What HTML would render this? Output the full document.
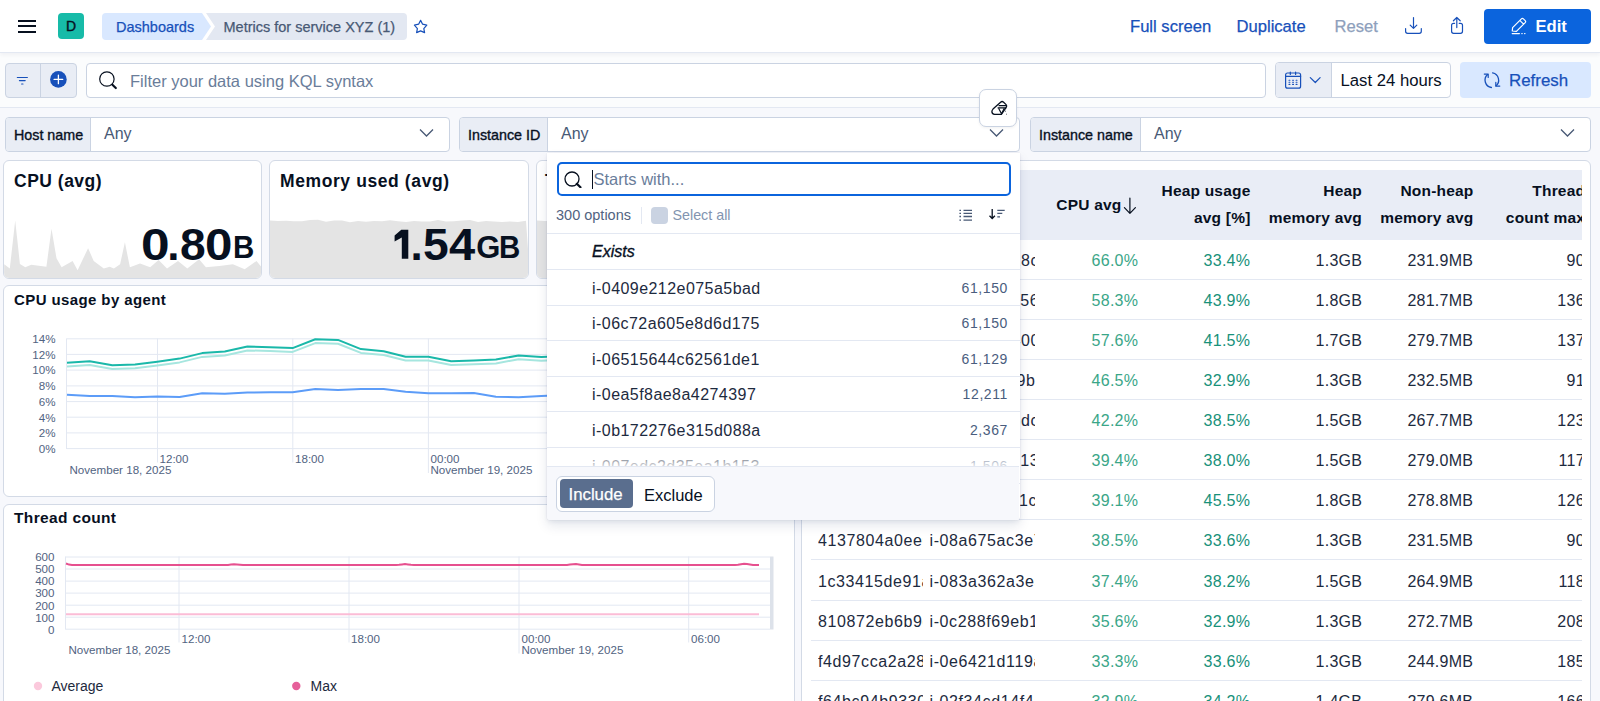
<!DOCTYPE html>
<html><head><meta charset="utf-8">
<style>
*{box-sizing:border-box;margin:0;padding:0}
html,body{width:1600px;height:701px;overflow:hidden;background:#f7f8fc;font-family:"Liberation Sans",sans-serif;color:#1d2a3e}
.abs{position:absolute}
#hdr{position:absolute;left:0;top:0;width:1600px;height:53px;background:#fff;border-bottom:1px solid #e3e8f2;box-shadow:0 2px 4px rgba(0,20,60,.05);z-index:1}
#qbar{position:absolute;left:0;top:53px;width:1600px;height:55px;background:#fbfcfd;border-bottom:1px solid #e3e8f2}
.t{position:absolute;white-space:nowrap;line-height:1}
.med{-webkit-text-stroke:0.25px currentColor}
.big{color:#07101f;font-weight:bold;transform-origin:0 0}
</style></head><body>
<!-- HEADER -->
<div id="hdr">
  <div class="abs" style="left:18px;top:19.7px;width:18px;height:2px;background:#07101f"></div>
  <div class="abs" style="left:18px;top:25.3px;width:18px;height:2px;background:#07101f"></div>
  <div class="abs" style="left:18px;top:30.8px;width:18px;height:2px;background:#07101f"></div>
  <div class="abs" style="left:58px;top:13px;width:26px;height:26px;border-radius:4px;background:#17bba8;color:#07101f;font-size:14px;text-align:center;line-height:26px;-webkit-text-stroke:0.4px #07101f">D</div>
  <svg class="abs" style="left:102px;top:13px" width="306" height="27" viewBox="0 0 306 27">
    <path d="M4 0 H100 L109 13.5 L100 27 H4 Q0 27 0 23 V4 Q0 0 4 0Z" fill="#d9e8ff"/>
    <path d="M104 0 H301 Q305 0 305 4 V23 Q305 27 301 27 H104 L113 13.5Z" fill="#e3e8f2"/>
  </svg>
  <div class="t med" style="left:116px;top:19.5px;font-size:14.5px;color:#1750ba">Dashboards</div>
  <div class="t med" style="left:223.5px;top:19.5px;font-size:14.5px;color:#485975">Metrics for service XYZ (1)</div>
  <div class="t med" style="left:1130px;top:18.5px;font-size:16.6px;color:#1750ba">Full screen</div>
  <div class="t med" style="left:1236.5px;top:18.5px;font-size:16.6px;color:#1750ba">Duplicate</div>
  <div class="t med" style="left:1334.5px;top:18.5px;font-size:16.6px;color:#8e9fbc">Reset</div>
  <div class="abs" style="left:1484px;top:9px;width:107px;height:35px;border-radius:4px;background:#0b64dd"></div>
  <div class="t" style="left:1535.5px;top:18.5px;font-size:16.6px;color:#fff;font-weight:bold">Edit</div>
</div>
<!-- QUERY BAR -->
<div id="qbar">
  <div class="abs" style="left:5px;top:10px;width:72px;height:35px;border:1px solid #cad3e2;border-radius:4px;background:#e9edf5"></div>
  <div class="abs" style="left:40px;top:10px;width:1px;height:35px;background:#cad3e2"></div>
  <div class="abs" style="left:86px;top:10px;width:1180px;height:35px;border:1px solid #cad3e2;border-radius:4px;background:#fff"></div>
  <div class="t" style="left:130px;top:19.5px;font-size:16.5px;color:#6a7d9a">Filter your data using KQL syntax</div>
  <div class="abs" style="left:1275px;top:9px;width:176px;height:36px;border:1px solid #cad3e2;border-radius:4px;background:#fff"></div>
  <div class="abs" style="left:1276px;top:10px;width:56px;height:34px;background:#e9edf5;border-right:1px solid #cad3e2;border-radius:3px 0 0 3px"></div>
  <div class="t" style="left:1340.5px;top:19.5px;font-size:16.7px;color:#07101f">Last 24 hours</div>
  <div class="abs" style="left:1460px;top:9px;width:131px;height:36px;border-radius:4px;background:#d9e8ff"></div>
  <div class="t med" style="left:1509px;top:19.5px;font-size:16.9px;color:#1750ba">Refresh</div>
</div>
<svg class="abs" style="left:0;top:0;z-index:2" width="1600" height="100" viewBox="0 0 1600 100" fill="none" stroke-linecap="round" stroke-linejoin="round">
  <path d="M420.6 20.4 L422.6 24.2 L426.8 25.2 L423.8 28.6 L424.6 32.6 L420.6 30.9 L416.6 32.6 L417.4 28.6 L414.4 25.2 L418.6 24.2 Z" stroke="#1750ba" stroke-width="1.2"/>
  <path d="M1413.5 17.5 V28.3 M1410.2 25.1 L1413.5 28.4 L1416.8 25.1 M1405.6 28.6 V31.3 Q1405.6 33.3 1407.6 33.3 H1419.3 Q1421.3 33.3 1421.3 31.3 V28.6" stroke="#1750ba" stroke-width="1.2"/>
  <path d="M1456.8 17.6 V27.6 M1453.4 20.8 L1456.8 17.5 L1460.2 20.8 M1454.6 23.3 H1453.5 Q1451.6 23.3 1451.6 25.3 V31.3 Q1451.6 33.3 1453.6 33.3 H1460.5 Q1462.5 33.3 1462.5 31.3 V25.3 Q1462.5 23.3 1460.5 23.3 H1459.2" stroke="#1750ba" stroke-width="1.2"/>
  <path d="M1512.3 31 L1512.6 27.6 L1521.4 18.8 Q1522.4 17.8 1523.4 18.8 L1525.2 20.6 Q1526.2 21.6 1525.2 22.6 L1516.4 31.4 Z M1519.8 20.4 L1523.6 24.2" stroke="#fff" stroke-width="1.2"/>
  <path d="M1512.2 33.6 H1519.4 M1521.8 33.6 H1522.2 M1524.6 33.6 H1525" stroke="#fff" stroke-width="1.2"/>
  <path d="M17.3 77.5 H27.4 M19.4 80.6 H25.2 M21.6 84 H23" stroke="#1750ba" stroke-width="1.1"/>
  <circle cx="58.4" cy="79.4" r="8.3" fill="#1750ba" stroke="none"/>
  <path d="M58.4 75.1 V83.7 M54.1 79.4 H62.7" stroke="#fff" stroke-width="1.3"/>
  <circle cx="106.9" cy="79" r="7.2" stroke="#07101f" stroke-width="1.2"/>
  <path d="M112.4 84.8 L115.8 88" stroke="#07101f" stroke-width="2.2"/>
  <rect x="1285.6" y="73" width="15" height="15.2" rx="2" stroke="#1750ba" stroke-width="1.2"/>
  <path d="M1285.6 76.4 H1300.6 M1290.3 72 V74.4 M1295.6 72 V74.4" stroke="#1750ba" stroke-width="1.2"/>
  <path d="M1289 80.2h0.9M1292.6 80.2h0.9M1296.1 80.2h0.9M1289 82.3h0.9M1292.6 82.3h0.9M1296.1 82.3h0.9M1289 84.4h0.9M1292.6 84.4h0.9M1296.1 84.4h0.9" stroke="#1750ba" stroke-width="1.1"/>
  <path d="M1310.3 77.6 L1315.3 82.5 L1320.1 77.7" stroke="#1750ba" stroke-width="1.2"/>
  <path d="M1487.6 74.6 A7.4 7.4 0 0 0 1491.4 87.5 M1492.6 72.9 A7.4 7.4 0 0 1 1495.9 85.9" stroke="#1750ba" stroke-width="1.3"/>
  <path d="M1484.3 74.1 H1488.2 V77.5 M1495.8 82.4 V86.1 H1499.8" stroke="#1750ba" stroke-width="1.2"/>
</svg>
<!-- CONTROLS -->
<div class="abs" style="left:5px;top:117px;width:445px;height:35px;border:1px solid #cad3e2;border-radius:4px;background:#fff;overflow:hidden">
  <div class="abs" style="left:0;top:0;width:85px;height:33px;background:#e9edf5;border-right:1px solid #cad3e2"></div>
</div>
<div class="t" style="left:14px;top:128px;font-size:14.3px;color:#07101f;-webkit-text-stroke:0.35px #07101f">Host name</div>
<div class="t" style="left:104px;top:126px;font-size:16px;color:#485975">Any</div>
<svg class="abs" style="left:419px;top:128px" width="15" height="10" viewBox="0 0 15 10"><path d="M1 1.5 L7.5 8 L14 1.5" fill="none" stroke="#485975" stroke-width="1.3"/></svg>

<div class="abs" style="left:459px;top:117px;width:561px;height:35px;border:1px solid #cad3e2;border-radius:4px;background:#fff;overflow:hidden">
  <div class="abs" style="left:0;top:0;width:88px;height:33px;background:#e9edf5;border-right:1px solid #cad3e2"></div>
</div>
<div class="t" style="left:468px;top:128px;font-size:14.3px;color:#07101f;-webkit-text-stroke:0.35px #07101f">Instance ID</div>
<div class="t" style="left:561px;top:126px;font-size:16px;color:#485975">Any</div>
<svg class="abs" style="left:989px;top:128px" width="15" height="10" viewBox="0 0 15 10"><path d="M1 1.5 L7.5 8 L14 1.5" fill="none" stroke="#485975" stroke-width="1.3"/></svg>

<div class="abs" style="left:1030px;top:117px;width:561px;height:35px;border:1px solid #cad3e2;border-radius:4px;background:#fff;overflow:hidden">
  <div class="abs" style="left:0;top:0;width:110px;height:33px;background:#e9edf5;border-right:1px solid #cad3e2"></div>
</div>
<div class="t" style="left:1039px;top:128px;font-size:14.3px;color:#07101f;-webkit-text-stroke:0.35px #07101f">Instance name</div>
<div class="t" style="left:1154px;top:126px;font-size:16px;color:#485975">Any</div>
<svg class="abs" style="left:1560px;top:128px" width="15" height="10" viewBox="0 0 15 10"><path d="M1 1.5 L7.5 8 L14 1.5" fill="none" stroke="#485975" stroke-width="1.3"/></svg>
<!-- PANELS -->
<div class="abs" style="left:3px;top:160px;width:259px;height:119px;border:1px solid #d3dae6;border-radius:6px;background:#fff;overflow:hidden">
  <svg class="abs" style="left:0;top:0" width="258" height="117" viewBox="0 0 258 117"><path d="M0 117 L0.2 103.2 L5.8 107.5 L11.2 59.4 L15.9 102.9 L21.3 106.3 L27.2 103.8 L42.4 105.8 L47.5 67.8 L52.5 97.3 L57.6 106.3 L68.6 99.9 L73.6 109.2 L84.1 87.2 L89.7 99.9 L99.8 107.5 L105.7 105.8 L109.9 107.5 L116.1 103.2 L120.9 81.3 L125.9 106.3 L136.0 102.4 L146.2 106.3 L154.6 99.0 L163.0 107.5 L174.0 99.9 L183.3 107.5 L195.1 98.2 L201.9 106.3 L215.4 105.0 L228.9 103.2 L240.7 108.3 L252.5 99.9 L257.2 105.8 L258 117 Z" fill="#e4e4e4"/></svg>
</div>
<div class="t" style="left:14px;top:172.5px;font-size:17.5px;color:#07101f;font-weight:bold;letter-spacing:0.5px">CPU (avg)</div>
<div class="t big" style="left:140.7px;top:222.7px;font-size:44px;transform:scaleX(1.17)">0</div><div class="t big" style="left:167.2px;top:222.7px;font-size:44px;transform:scaleX(1.00)">.</div><div class="t big" style="left:180.2px;top:222.7px;font-size:44px;transform:scaleX(1.05)">8</div><div class="t big" style="left:205.0px;top:222.7px;font-size:44px;transform:scaleX(1.12)">0</div><div class="t big" style="left:232.5px;top:232.3px;font-size:31px;transform:scaleX(0.95)">B</div>

<div class="abs" style="left:269px;top:160px;width:260px;height:119px;border:1px solid #d3dae6;border-radius:6px;background:#fff;overflow:hidden">
  <svg class="abs" style="left:0;top:0" width="258" height="117" viewBox="0 0 258 117"><path d="M0 117 L0 59.4 L8 60.1 L16 59.7 L24 60.2 L32 60.3 L40 59.0 L48 58.8 L56 60.8 L64 59.4 L72 59.4 L80 61.2 L88 59.9 L96 60.8 L104 59.9 L112 60.3 L120 59.2 L128 60.3 L136 60.9 L144 60.1 L152 60.6 L160 60.4 L168 59.0 L176 60.6 L184 60.2 L192 59.5 L200 58.9 L208 60.9 L216 59.9 L224 60.5 L232 60.9 L240 60.5 L248 61.0 L256 59.7 L260 117 Z" fill="#e4e4e4"/></svg>
</div>
<div class="t" style="left:280px;top:172.5px;font-size:17.5px;color:#07101f;font-weight:bold;letter-spacing:0.6px">Memory used (avg)</div>
<svg class="abs" style="left:390px;top:225px" width="22" height="36" viewBox="390 225 22 36"><path d="M401.3 229.8 H408.3 V258.8 H401.8 V237.6 L394.6 241.6 V235.6 Z" fill="#07101f"/></svg><div class="t big" style="left:410.4px;top:222.7px;font-size:44px;transform:scaleX(1.00)">.</div><div class="t big" style="left:423.1px;top:222.7px;font-size:44px;transform:scaleX(1.05)">5</div><div class="t big" style="left:449.1px;top:222.7px;font-size:44px;transform:scaleX(1.07)">4</div><div class="t big" style="left:476.3px;top:232.3px;font-size:31px;transform:scaleX(1.00)">G</div><div class="t big" style="left:498.6px;top:232.3px;font-size:31px;transform:scaleX(0.95)">B</div>

<div class="abs" style="left:536px;top:160px;width:260px;height:119px;border:1px solid #d3dae6;border-radius:6px;background:#fff;overflow:hidden">
  <svg class="abs" style="left:0;top:0" width="258" height="117" viewBox="0 0 258 117"><path d="M0 117 L0 59.4 L8 60.1 L16 59.7 L24 60.2 L32 60.3 L40 59.0 L48 58.8 L56 60.8 L64 59.4 L72 59.4 L80 61.2 L88 59.9 L96 60.8 L104 59.9 L112 60.3 L120 59.2 L128 60.3 L136 60.9 L144 60.1 L152 60.6 L160 60.4 L168 59.0 L176 60.6 L184 60.2 L192 59.5 L200 58.9 L208 60.9 L216 59.9 L224 60.5 L232 60.9 L240 60.5 L248 61.0 L256 59.7 L260 117 Z" fill="#e4e4e4"/></svg>
</div>

<div class="t" style="left:545px;top:172.5px;font-size:17.5px;color:#07101f;font-weight:bold">Thread count</div>
<div class="abs" style="left:3px;top:285px;width:792px;height:212px;border:1px solid #d3dae6;border-radius:6px;background:#fff"></div>
<div class="t" style="left:14px;top:291.7px;font-size:15px;color:#07101f;font-weight:bold;letter-spacing:0.4px">CPU usage by agent</div>


<div class="abs" style="left:3px;top:504px;width:792px;height:220px;border:1px solid #d3dae6;border-radius:6px;background:#fff"></div>
<div class="t" style="left:14px;top:510px;font-size:15.5px;color:#07101f;font-weight:bold;letter-spacing:0.35px">Thread count</div>
<svg class="abs" style="left:0;top:0" width="800" height="701" viewBox="0 0 800 701">
<g stroke="#e3e8f2" stroke-width="1" fill="none"><path d="M66.5 338.8 H781"/><path d="M66.5 354.4 H781"/><path d="M66.5 370.1 H781"/><path d="M66.5 385.9 H781"/><path d="M66.5 401.6 H781"/><path d="M66.5 417.2 H781"/><path d="M66.5 432.9 H781"/><path d="M66.5 448.6 H781"/><path d="M66.5 338.5 V449"/><path d="M157.5 338.5 V462.5"/><path d="M292.8 338.5 V462.5"/><path d="M428.4 338.5 V473.0"/><path d="M563.5 338.5 V462.5"/></g>
<g font-family="Liberation Sans" font-size="11.6" fill="#516381" text-anchor="end"><text x="55.5" y="343.1">14%</text><text x="55.5" y="358.8">12%</text><text x="55.5" y="374.4">10%</text><text x="55.5" y="390.2">8%</text><text x="55.5" y="405.9">6%</text><text x="55.5" y="421.6">4%</text><text x="55.5" y="437.2">2%</text><text x="55.5" y="452.9">0%</text></g>
<g font-family="Liberation Sans" font-size="11.6" fill="#516381"><text x="159.5" y="462.5">12:00</text><text x="69.5" y="474">November 18, 2025</text><text x="295" y="462.5">18:00</text><text x="430.5" y="462.5">00:00</text><text x="430.5" y="474">November 19, 2025</text></g>
<path d="M67.0 366.6 L89.7 365.0 L112.3 369.1 L135.0 368.2 L157.3 365.5 L179.6 362.4 L202.2 356.9 L224.8 355.4 L247.4 350.4 L270.0 351.1 L292.6 351.9 L315.3 343.1 L338.0 343.7 L360.9 352.9 L383.7 355.0 L405.6 360.5 L428.4 360.5 L451.2 365.1 L473.9 364.2 L495.9 363.4 L518.6 359.2 L541.4 360.8 L564.0 359.8 L586.6 360.8 L609.2 358.8 L631.8 357.8 L654.4 359.8 L677.0 358.8 L699.6 356.8 L722.2 357.8 L744.8 358.8 L767.4 357.8 L780.0 357.8" fill="none" stroke="#a6e6df" stroke-width="2" stroke-linejoin="round"/><path d="M67.0 362.8 L89.7 361.2 L112.3 365.3 L135.0 364.4 L157.3 361.7 L179.6 358.6 L202.2 353.1 L224.8 351.6 L247.4 346.6 L270.0 347.3 L292.6 348.1 L315.3 339.3 L338.0 339.9 L360.9 349.1 L383.7 351.2 L405.6 356.7 L428.4 356.7 L451.2 361.3 L473.9 360.4 L495.9 359.6 L518.6 355.4 L541.4 357.0 L564.0 356.0 L586.6 357.0 L609.2 355.0 L631.8 354.0 L654.4 356.0 L677.0 355.0 L699.6 353.0 L722.2 354.0 L744.8 355.0 L767.4 354.0 L780.0 354.0" fill="none" stroke="#1ab8a9" stroke-width="2" stroke-linejoin="round"/><path d="M67.0 394.8 L89.7 396.1 L112.3 396.1 L135.0 397.2 L157.3 396.6 L179.6 396.9 L202.2 393.3 L224.8 393.8 L247.4 392.5 L270.0 392.2 L292.6 392.2 L315.3 389.1 L338.0 390.0 L360.9 389.1 L383.7 389.1 L405.6 391.7 L428.4 393.3 L451.2 393.3 L473.9 393.0 L495.9 396.7 L518.6 397.2 L541.4 395.9 L564.0 395.0 L586.6 394.0 L609.2 395.0 L631.8 396.0 L654.4 395.0 L677.0 394.0 L699.6 395.0 L722.2 396.0 L744.8 395.0 L767.4 395.0 L780.0 395.0" fill="none" stroke="#5c9cf8" stroke-width="2" stroke-linejoin="round"/>
<g stroke="#e3e8f2" stroke-width="1" fill="none"><path d="M65.5 557.0 H770"/><path d="M65.5 569.0 H770"/><path d="M65.5 581.1 H770"/><path d="M65.5 593.1 H770"/><path d="M65.5 605.2 H770"/><path d="M65.5 617.2 H770"/><path d="M65.5 629.2 H770"/><path d="M65.5 556.5 V629.5"/><path d="M179.0 556.5 V642.5"/><path d="M349.0 556.5 V642.5"/><path d="M519.0 556.5 V653.5"/><path d="M688.7 556.5 V642.5"/></g><rect x="770" y="556.5" width="3.5" height="73" fill="#dde2ea"/>
<g font-family="Liberation Sans" font-size="11.6" fill="#516381" text-anchor="end"><text x="54.5" y="561.3">600</text><text x="54.5" y="573.3">500</text><text x="54.5" y="585.4">400</text><text x="54.5" y="597.4">300</text><text x="54.5" y="609.5">200</text><text x="54.5" y="621.5">100</text><text x="54.5" y="633.5">0</text></g>
<g font-family="Liberation Sans" font-size="11.6" fill="#516381"><text x="181.5" y="642.5">12:00</text><text x="68.5" y="653.5">November 18, 2025</text><text x="351" y="642.5">18:00</text><text x="521.5" y="642.5">00:00</text><text x="521.5" y="653.5">November 19, 2025</text><text x="691" y="642.5">06:00</text></g>
<path d="M66.0 563.5 L69.0 564.6 L72.0 565.0 L75.0 565.0 L78.0 565.0 L81.0 565.0 L84.0 565.0 L87.0 565.0 L90.0 565.0 L93.0 565.0 L96.0 565.0 L99.0 565.0 L102.0 565.0 L105.0 565.0 L108.0 565.0 L111.0 565.0 L114.0 565.0 L117.0 565.0 L120.0 565.0 L123.0 565.0 L126.0 565.0 L129.0 565.0 L132.0 565.0 L135.0 565.0 L138.0 565.0 L141.0 565.0 L144.0 565.0 L147.0 565.0 L150.0 565.0 L153.0 565.0 L156.0 565.0 L159.0 565.0 L162.0 565.0 L165.0 565.0 L168.0 565.0 L171.0 565.0 L174.0 565.0 L177.0 565.0 L180.0 565.0 L183.0 565.0 L186.0 565.0 L189.0 565.0 L192.0 565.0 L195.0 565.0 L198.0 565.0 L201.0 565.0 L204.0 565.0 L207.0 565.0 L210.0 565.0 L213.0 565.0 L216.0 565.0 L219.0 565.0 L222.0 565.0 L225.0 565.0 L228.0 564.9 L231.0 564.6 L234.0 564.3 L237.0 564.4 L240.0 564.7 L243.0 565.0 L246.0 565.0 L249.0 565.0 L252.0 565.0 L255.0 565.0 L258.0 565.0 L261.0 565.0 L264.0 565.0 L267.0 565.0 L270.0 565.0 L273.0 565.0 L276.0 565.0 L279.0 565.0 L282.0 565.0 L285.0 565.0 L288.0 565.0 L291.0 565.0 L294.0 565.0 L297.0 565.0 L300.0 565.0 L303.0 565.0 L306.0 565.0 L309.0 565.0 L312.0 565.0 L315.0 565.0 L318.0 565.0 L321.0 565.0 L324.0 565.0 L327.0 565.0 L330.0 565.0 L333.0 565.0 L336.0 565.0 L339.0 565.0 L342.0 565.0 L345.0 565.0 L348.0 565.0 L351.0 565.0 L354.0 565.0 L357.0 565.0 L360.0 565.0 L363.0 565.0 L366.0 565.0 L369.0 565.0 L372.0 565.0 L375.0 565.0 L378.0 565.0 L381.0 565.0 L384.0 565.0 L387.0 565.0 L390.0 565.0 L393.0 565.0 L396.0 565.0 L399.0 564.8 L402.0 564.4 L405.0 564.0 L408.0 564.4 L411.0 564.8 L414.0 565.0 L417.0 565.0 L420.0 565.0 L423.0 565.0 L426.0 565.0 L429.0 565.0 L432.0 565.0 L435.0 565.0 L438.0 565.0 L441.0 565.0 L444.0 565.0 L447.0 565.0 L450.0 565.0 L453.0 565.0 L456.0 565.0 L459.0 565.0 L462.0 565.0 L465.0 565.0 L468.0 565.0 L471.0 565.0 L474.0 565.0 L477.0 565.0 L480.0 565.0 L483.0 565.0 L486.0 565.0 L489.0 565.0 L492.0 565.0 L495.0 565.0 L498.0 565.0 L501.0 565.0 L504.0 565.0 L507.0 565.0 L510.0 565.0 L513.0 565.0 L516.0 565.0 L519.0 565.0 L522.0 565.0 L525.0 565.0 L528.0 565.0 L531.0 565.0 L534.0 565.0 L537.0 565.0 L540.0 565.0 L543.0 565.0 L546.0 565.0 L549.0 565.0 L552.0 565.0 L555.0 565.0 L558.0 565.0 L561.0 565.0 L564.0 565.0 L567.0 565.0 L570.0 564.6 L573.0 564.2 L576.0 564.1 L579.0 564.5 L582.0 564.9 L585.0 565.0 L588.0 565.0 L591.0 565.0 L594.0 565.0 L597.0 565.0 L600.0 565.0 L603.0 565.0 L606.0 565.0 L609.0 565.0 L612.0 565.0 L615.0 565.0 L618.0 565.0 L621.0 565.0 L624.0 565.0 L627.0 565.0 L630.0 565.0 L633.0 565.0 L636.0 565.0 L639.0 565.0 L642.0 565.0 L645.0 565.0 L648.0 565.0 L651.0 565.0 L654.0 565.0 L657.0 565.0 L660.0 565.0 L663.0 565.0 L666.0 565.0 L669.0 565.0 L672.0 565.0 L675.0 565.0 L678.0 565.0 L681.0 565.0 L684.0 565.0 L687.0 565.0 L690.0 565.0 L693.0 565.0 L696.0 565.0 L699.0 565.0 L702.0 565.0 L705.0 565.0 L708.0 565.0 L711.0 565.0 L714.0 565.0 L717.0 565.0 L720.0 565.0 L723.0 565.0 L726.0 565.0 L729.0 565.0 L732.0 565.0 L735.0 565.0 L738.0 564.8 L741.0 564.2 L744.0 563.7 L747.0 563.9 L750.0 564.4 L753.0 565.0 L756.0 565.0 L759.0 565.0" fill="none" stroke="#e6508f" stroke-width="2"/><path d="M66 614.3 H759" fill="none" stroke="#fbbcd6" stroke-width="2"/><circle cx="38" cy="686" r="4.2" fill="#fbc9dc"/><circle cx="296.3" cy="686" r="4.2" fill="#e6609a"/><g font-family="Liberation Sans" font-size="14" fill="#1d2a3e"><text x="51.5" y="690.5">Average</text><text x="310.5" y="690.5">Max</text></g></svg>


<div class="abs" style="left:801px;top:160px;width:790px;height:580px;border:1px solid #d3dae6;border-radius:6px;background:#fff"></div>
<!--TABLE_START--><div class="abs" style="left:811px;top:170px;width:771px;height:531px;overflow:hidden">
<div class="abs" style="left:0;top:0;width:771px;height:69.5px;background:#e9edf6"></div>
<div class="t" style="right:460.5px;top:26.5px;font-size:15.5px;font-weight:bold;color:#07101f;letter-spacing:0.2px">CPU avg</div>
<svg class="abs" style="left:312.0px;top:27.0px" width="14" height="18" viewBox="0 0 14 18" fill="none" stroke="#07101f" stroke-width="1.2" stroke-linecap="round" stroke-linejoin="round"><path d="M6.9 1 V16.3 M1.4 10.6 L6.9 16.3 L12.4 10.6"/></svg>
<div class="t" style="right:331.5px;top:13.0px;font-size:15.5px;font-weight:bold;color:#07101f;letter-spacing:0.2px">Heap usage</div>
<div class="t" style="right:331.5px;top:40.0px;font-size:15.5px;font-weight:bold;color:#07101f;letter-spacing:0.2px">avg [%]</div>
<div class="t" style="right:220.0px;top:13.0px;font-size:15.5px;font-weight:bold;color:#07101f;letter-spacing:0.2px">Heap</div>
<div class="t" style="right:220.0px;top:40.0px;font-size:15.5px;font-weight:bold;color:#07101f;letter-spacing:0.2px">memory avg</div>
<div class="t" style="right:108.5px;top:13.0px;font-size:15.5px;font-weight:bold;color:#07101f;letter-spacing:0.2px">Non-heap</div>
<div class="t" style="right:108.5px;top:40.0px;font-size:15.5px;font-weight:bold;color:#07101f;letter-spacing:0.2px">memory avg</div>
<div class="t" style="right:-3.2px;top:13.0px;font-size:15.5px;font-weight:bold;color:#07101f;letter-spacing:0.2px">Thread</div>
<div class="t" style="right:-3.2px;top:40.0px;font-size:15.5px;font-weight:bold;color:#07101f;letter-spacing:0.2px">count max</div>
<div class="abs" style="left:0;top:108.7px;width:771px;height:1px;background:#e3e8f2"></div>
<div class="abs" style="left:7px;top:80.7px;width:105px;height:22px;overflow:hidden"><div class="t" style="left:0;top:2px;font-size:16px;color:#1d2a3e;letter-spacing:0.25px;letter-spacing:0.6px">4a1b27e0c58c</div></div>
<div class="abs" style="left:118.5px;top:80.7px;width:105px;height:22px;overflow:hidden"><div class="t" style="left:5.5px;top:2px;font-size:16px;color:#1d2a3e;letter-spacing:0.25px;letter-spacing:0.6px">i-0409e2128c7</div></div>
<div class="t" style="right:443.8px;top:82.7px;font-size:16px;color:#1d2a3e;letter-spacing:0.25px;color:#3aa688">66.0%</div>
<div class="t" style="right:331.8px;top:82.7px;font-size:16px;color:#1d2a3e;letter-spacing:0.25px;color:#18917a">33.4%</div>
<div class="t" style="right:219.8px;top:82.7px;font-size:16px;color:#1d2a3e;letter-spacing:0.25px">1.3GB</div>
<div class="t" style="right:108.8px;top:82.7px;font-size:16px;color:#1d2a3e;letter-spacing:0.25px">231.9MB</div>
<div class="t" style="right:-2.8px;top:82.7px;font-size:16px;color:#1d2a3e;letter-spacing:0.25px">90</div>
<div class="abs" style="left:0;top:148.8px;width:771px;height:1px;background:#e3e8f2"></div>
<div class="abs" style="left:7px;top:120.8px;width:105px;height:22px;overflow:hidden"><div class="t" style="left:0;top:2px;font-size:16px;color:#1d2a3e;letter-spacing:0.25px;letter-spacing:0.6px">5b2c38f1d56e</div></div>
<div class="abs" style="left:118.5px;top:120.8px;width:105px;height:22px;overflow:hidden"><div class="t" style="left:5.5px;top:2px;font-size:16px;color:#1d2a3e;letter-spacing:0.25px;letter-spacing:0.6px">i-06c72a6056f</div></div>
<div class="t" style="right:443.8px;top:122.8px;font-size:16px;color:#1d2a3e;letter-spacing:0.25px;color:#3aa688">58.3%</div>
<div class="t" style="right:331.8px;top:122.8px;font-size:16px;color:#1d2a3e;letter-spacing:0.25px;color:#18917a">43.9%</div>
<div class="t" style="right:219.8px;top:122.8px;font-size:16px;color:#1d2a3e;letter-spacing:0.25px">1.8GB</div>
<div class="t" style="right:108.8px;top:122.8px;font-size:16px;color:#1d2a3e;letter-spacing:0.25px">281.7MB</div>
<div class="t" style="right:-2.8px;top:122.8px;font-size:16px;color:#1d2a3e;letter-spacing:0.25px">136</div>
<div class="abs" style="left:0;top:188.9px;width:771px;height:1px;background:#e3e8f2"></div>
<div class="abs" style="left:7px;top:160.9px;width:105px;height:22px;overflow:hidden"><div class="t" style="left:0;top:2px;font-size:16px;color:#1d2a3e;letter-spacing:0.25px;letter-spacing:0.6px">6c3d49a2e00c</div></div>
<div class="abs" style="left:118.5px;top:160.9px;width:105px;height:22px;overflow:hidden"><div class="t" style="left:5.5px;top:2px;font-size:16px;color:#1d2a3e;letter-spacing:0.25px;letter-spacing:0.6px">i-0651564400c</div></div>
<div class="t" style="right:443.8px;top:162.9px;font-size:16px;color:#1d2a3e;letter-spacing:0.25px;color:#3aa688">57.6%</div>
<div class="t" style="right:331.8px;top:162.9px;font-size:16px;color:#1d2a3e;letter-spacing:0.25px;color:#18917a">41.5%</div>
<div class="t" style="right:219.8px;top:162.9px;font-size:16px;color:#1d2a3e;letter-spacing:0.25px">1.7GB</div>
<div class="t" style="right:108.8px;top:162.9px;font-size:16px;color:#1d2a3e;letter-spacing:0.25px">279.7MB</div>
<div class="t" style="right:-2.8px;top:162.9px;font-size:16px;color:#1d2a3e;letter-spacing:0.25px">137</div>
<div class="abs" style="left:0;top:229.0px;width:771px;height:1px;background:#e3e8f2"></div>
<div class="abs" style="left:7px;top:201.0px;width:105px;height:22px;overflow:hidden"><div class="t" style="left:0;top:2px;font-size:16px;color:#1d2a3e;letter-spacing:0.25px;letter-spacing:0.6px">7d4e5ab3f9be</div></div>
<div class="abs" style="left:118.5px;top:201.0px;width:105px;height:22px;overflow:hidden"><div class="t" style="left:5.5px;top:2px;font-size:16px;color:#1d2a3e;letter-spacing:0.25px;letter-spacing:0.6px">i-0ea5f8ae9be</div></div>
<div class="t" style="right:443.8px;top:203.0px;font-size:16px;color:#1d2a3e;letter-spacing:0.25px;color:#3aa688">46.5%</div>
<div class="t" style="right:331.8px;top:203.0px;font-size:16px;color:#1d2a3e;letter-spacing:0.25px;color:#18917a">32.9%</div>
<div class="t" style="right:219.8px;top:203.0px;font-size:16px;color:#1d2a3e;letter-spacing:0.25px">1.3GB</div>
<div class="t" style="right:108.8px;top:203.0px;font-size:16px;color:#1d2a3e;letter-spacing:0.25px">232.5MB</div>
<div class="t" style="right:-2.8px;top:203.0px;font-size:16px;color:#1d2a3e;letter-spacing:0.25px">91</div>
<div class="abs" style="left:0;top:269.1px;width:771px;height:1px;background:#e3e8f2"></div>
<div class="abs" style="left:7px;top:241.1px;width:105px;height:22px;overflow:hidden"><div class="t" style="left:0;top:2px;font-size:16px;color:#1d2a3e;letter-spacing:0.25px;letter-spacing:0.6px">8e5f6bc4adcc</div></div>
<div class="abs" style="left:118.5px;top:241.1px;width:105px;height:22px;overflow:hidden"><div class="t" style="left:5.5px;top:2px;font-size:16px;color:#1d2a3e;letter-spacing:0.25px;letter-spacing:0.6px">i-0b172276dc4</div></div>
<div class="t" style="right:443.8px;top:243.1px;font-size:16px;color:#1d2a3e;letter-spacing:0.25px;color:#3aa688">42.2%</div>
<div class="t" style="right:331.8px;top:243.1px;font-size:16px;color:#1d2a3e;letter-spacing:0.25px;color:#18917a">38.5%</div>
<div class="t" style="right:219.8px;top:243.1px;font-size:16px;color:#1d2a3e;letter-spacing:0.25px">1.5GB</div>
<div class="t" style="right:108.8px;top:243.1px;font-size:16px;color:#1d2a3e;letter-spacing:0.25px">267.7MB</div>
<div class="t" style="right:-2.8px;top:243.1px;font-size:16px;color:#1d2a3e;letter-spacing:0.25px">123</div>
<div class="abs" style="left:0;top:309.2px;width:771px;height:1px;background:#e3e8f2"></div>
<div class="abs" style="left:7px;top:281.2px;width:105px;height:22px;overflow:hidden"><div class="t" style="left:0;top:2px;font-size:16px;color:#1d2a3e;letter-spacing:0.25px;letter-spacing:0.6px">9f607cd5b13a</div></div>
<div class="abs" style="left:118.5px;top:281.2px;width:105px;height:22px;overflow:hidden"><div class="t" style="left:5.5px;top:2px;font-size:16px;color:#1d2a3e;letter-spacing:0.25px;letter-spacing:0.6px">i-007edc2d13e</div></div>
<div class="t" style="right:443.8px;top:283.2px;font-size:16px;color:#1d2a3e;letter-spacing:0.25px;color:#3aa688">39.4%</div>
<div class="t" style="right:331.8px;top:283.2px;font-size:16px;color:#1d2a3e;letter-spacing:0.25px;color:#18917a">38.0%</div>
<div class="t" style="right:219.8px;top:283.2px;font-size:16px;color:#1d2a3e;letter-spacing:0.25px">1.5GB</div>
<div class="t" style="right:108.8px;top:283.2px;font-size:16px;color:#1d2a3e;letter-spacing:0.25px">279.0MB</div>
<div class="t" style="right:-2.8px;top:283.2px;font-size:16px;color:#1d2a3e;letter-spacing:0.25px">117</div>
<div class="abs" style="left:0;top:349.3px;width:771px;height:1px;background:#e3e8f2"></div>
<div class="abs" style="left:7px;top:321.3px;width:105px;height:22px;overflow:hidden"><div class="t" style="left:0;top:2px;font-size:16px;color:#1d2a3e;letter-spacing:0.25px;letter-spacing:0.6px">a0718de6clca</div></div>
<div class="abs" style="left:118.5px;top:321.3px;width:105px;height:22px;overflow:hidden"><div class="t" style="left:5.5px;top:2px;font-size:16px;color:#1d2a3e;letter-spacing:0.25px;letter-spacing:0.6px">i-09a3b5c11c2</div></div>
<div class="t" style="right:443.8px;top:323.3px;font-size:16px;color:#1d2a3e;letter-spacing:0.25px;color:#3aa688">39.1%</div>
<div class="t" style="right:331.8px;top:323.3px;font-size:16px;color:#1d2a3e;letter-spacing:0.25px;color:#18917a">45.5%</div>
<div class="t" style="right:219.8px;top:323.3px;font-size:16px;color:#1d2a3e;letter-spacing:0.25px">1.8GB</div>
<div class="t" style="right:108.8px;top:323.3px;font-size:16px;color:#1d2a3e;letter-spacing:0.25px">278.8MB</div>
<div class="t" style="right:-2.8px;top:323.3px;font-size:16px;color:#1d2a3e;letter-spacing:0.25px">126</div>
<div class="abs" style="left:0;top:389.4px;width:771px;height:1px;background:#e3e8f2"></div>
<div class="abs" style="left:7px;top:361.4px;width:105px;height:22px;overflow:hidden"><div class="t" style="left:0;top:2px;font-size:16px;color:#1d2a3e;letter-spacing:0.25px;letter-spacing:0.6px">4137804a0ee6</div></div>
<div class="abs" style="left:118.5px;top:361.4px;width:105px;height:22px;overflow:hidden"><div class="t" style="left:0;top:2px;font-size:16px;color:#1d2a3e;letter-spacing:0.25px;letter-spacing:0.6px">i-08a675ac3e7</div></div>
<div class="t" style="right:443.8px;top:363.4px;font-size:16px;color:#1d2a3e;letter-spacing:0.25px;color:#3aa688">38.5%</div>
<div class="t" style="right:331.8px;top:363.4px;font-size:16px;color:#1d2a3e;letter-spacing:0.25px;color:#18917a">33.6%</div>
<div class="t" style="right:219.8px;top:363.4px;font-size:16px;color:#1d2a3e;letter-spacing:0.25px">1.3GB</div>
<div class="t" style="right:108.8px;top:363.4px;font-size:16px;color:#1d2a3e;letter-spacing:0.25px">231.5MB</div>
<div class="t" style="right:-2.8px;top:363.4px;font-size:16px;color:#1d2a3e;letter-spacing:0.25px">90</div>
<div class="abs" style="left:0;top:429.5px;width:771px;height:1px;background:#e3e8f2"></div>
<div class="abs" style="left:7px;top:401.5px;width:105px;height:22px;overflow:hidden"><div class="t" style="left:0;top:2px;font-size:16px;color:#1d2a3e;letter-spacing:0.25px;letter-spacing:0.6px">1c33415de91a</div></div>
<div class="abs" style="left:118.5px;top:401.5px;width:105px;height:22px;overflow:hidden"><div class="t" style="left:0;top:2px;font-size:16px;color:#1d2a3e;letter-spacing:0.25px;letter-spacing:0.6px">i-083a362a3e5</div></div>
<div class="t" style="right:443.8px;top:403.5px;font-size:16px;color:#1d2a3e;letter-spacing:0.25px;color:#3aa688">37.4%</div>
<div class="t" style="right:331.8px;top:403.5px;font-size:16px;color:#1d2a3e;letter-spacing:0.25px;color:#18917a">38.2%</div>
<div class="t" style="right:219.8px;top:403.5px;font-size:16px;color:#1d2a3e;letter-spacing:0.25px">1.5GB</div>
<div class="t" style="right:108.8px;top:403.5px;font-size:16px;color:#1d2a3e;letter-spacing:0.25px">264.9MB</div>
<div class="t" style="right:-2.8px;top:403.5px;font-size:16px;color:#1d2a3e;letter-spacing:0.25px">118</div>
<div class="abs" style="left:0;top:469.6px;width:771px;height:1px;background:#e3e8f2"></div>
<div class="abs" style="left:7px;top:441.6px;width:105px;height:22px;overflow:hidden"><div class="t" style="left:0;top:2px;font-size:16px;color:#1d2a3e;letter-spacing:0.25px;letter-spacing:0.6px">810872eb6b9c</div></div>
<div class="abs" style="left:118.5px;top:441.6px;width:105px;height:22px;overflow:hidden"><div class="t" style="left:0;top:2px;font-size:16px;color:#1d2a3e;letter-spacing:0.25px;letter-spacing:0.6px">i-0c288f69eb1</div></div>
<div class="t" style="right:443.8px;top:443.6px;font-size:16px;color:#1d2a3e;letter-spacing:0.25px;color:#3aa688">35.6%</div>
<div class="t" style="right:331.8px;top:443.6px;font-size:16px;color:#1d2a3e;letter-spacing:0.25px;color:#18917a">32.9%</div>
<div class="t" style="right:219.8px;top:443.6px;font-size:16px;color:#1d2a3e;letter-spacing:0.25px">1.3GB</div>
<div class="t" style="right:108.8px;top:443.6px;font-size:16px;color:#1d2a3e;letter-spacing:0.25px">272.7MB</div>
<div class="t" style="right:-2.8px;top:443.6px;font-size:16px;color:#1d2a3e;letter-spacing:0.25px">208</div>
<div class="abs" style="left:0;top:509.7px;width:771px;height:1px;background:#e3e8f2"></div>
<div class="abs" style="left:7px;top:481.7px;width:105px;height:22px;overflow:hidden"><div class="t" style="left:0;top:2px;font-size:16px;color:#1d2a3e;letter-spacing:0.25px;letter-spacing:0.6px">f4d97cca2a28</div></div>
<div class="abs" style="left:118.5px;top:481.7px;width:105px;height:22px;overflow:hidden"><div class="t" style="left:0;top:2px;font-size:16px;color:#1d2a3e;letter-spacing:0.25px;letter-spacing:0.6px">i-0e6421d119a</div></div>
<div class="t" style="right:443.8px;top:483.7px;font-size:16px;color:#1d2a3e;letter-spacing:0.25px;color:#3aa688">33.3%</div>
<div class="t" style="right:331.8px;top:483.7px;font-size:16px;color:#1d2a3e;letter-spacing:0.25px;color:#18917a">33.6%</div>
<div class="t" style="right:219.8px;top:483.7px;font-size:16px;color:#1d2a3e;letter-spacing:0.25px">1.3GB</div>
<div class="t" style="right:108.8px;top:483.7px;font-size:16px;color:#1d2a3e;letter-spacing:0.25px">244.9MB</div>
<div class="t" style="right:-2.8px;top:483.7px;font-size:16px;color:#1d2a3e;letter-spacing:0.25px">185</div>
<div class="abs" style="left:0;top:549.8px;width:771px;height:1px;background:#e3e8f2"></div>
<div class="abs" style="left:7px;top:521.8px;width:105px;height:22px;overflow:hidden"><div class="t" style="left:0;top:2px;font-size:16px;color:#1d2a3e;letter-spacing:0.25px;letter-spacing:0.6px">f64bc94b9330</div></div>
<div class="abs" style="left:118.5px;top:521.8px;width:105px;height:22px;overflow:hidden"><div class="t" style="left:0;top:2px;font-size:16px;color:#1d2a3e;letter-spacing:0.25px;letter-spacing:0.6px">i-02f34cd14f4a</div></div>
<div class="t" style="right:443.8px;top:523.8px;font-size:16px;color:#1d2a3e;letter-spacing:0.25px;color:#3aa688">32.9%</div>
<div class="t" style="right:331.8px;top:523.8px;font-size:16px;color:#1d2a3e;letter-spacing:0.25px;color:#18917a">34.2%</div>
<div class="t" style="right:219.8px;top:523.8px;font-size:16px;color:#1d2a3e;letter-spacing:0.25px">1.4GB</div>
<div class="t" style="right:108.8px;top:523.8px;font-size:16px;color:#1d2a3e;letter-spacing:0.25px">279.6MB</div>
<div class="t" style="right:-2.8px;top:523.8px;font-size:16px;color:#1d2a3e;letter-spacing:0.25px">166</div>
</div><!--TABLE_END-->
<!-- eraser -->
<div class="abs" style="left:979px;top:89px;width:38px;height:38px;border:1px solid #cad3e2;border-radius:7px;background:#fff;box-shadow:0 1px 3px rgba(0,0,0,.06)"></div>
<svg class="abs" style="left:985px;top:95px" width="28" height="26" viewBox="985 95 28 26" fill="none" stroke="#07101f" stroke-linejoin="round"><path d="M1001.4 114.3 H994.6 Q991.9 114.3 991.9 111.6 Q991.9 110.2 993 109.1 L1000.6 102.2 Q1002.1 100.9 1003.6 102.2 L1006.1 104.6 Q1007.3 105.9 1006.2 107.3 Z" stroke-width="1.3"/><path d="M998.6 105.7 H1006.4 M997.6 107.9 H1006.2" stroke-width="1.3"/><path d="M998.6 108.3 L1001.5 113.8 L1004.3 108.3" stroke-width="1.2"/><path d="M1005.2 111.2 h0.6 M1006.3 114.2 h0.6" stroke-width="1"/></svg>
<!-- popover -->
<div class="abs" style="left:547px;top:153px;width:473px;height:367px;background:#fff;border-radius:0 0 3px 3px;box-shadow:0 6px 12px rgba(0,40,90,.10),0 2px 4px rgba(0,40,90,.06),0 0 1px rgba(0,40,90,.2);overflow:hidden">
  <div class="abs" style="left:10px;top:9px;width:454px;height:34px;border:2px solid #0b64dd;border-radius:5px;background:#fff"></div>
  <svg class="abs" style="left:17px;top:18px" width="19" height="17" viewBox="0 0 19 17"><circle cx="8" cy="8" r="7" fill="none" stroke="#07101f" stroke-width="1.3"/><path d="M12.8 12.8 L16.5 16.3" stroke="#07101f" stroke-width="2.2" stroke-linecap="round"/></svg>
  <div class="abs" style="left:45px;top:17px;width:1px;height:18.5px;background:#07101f"></div>
  <div class="t" style="left:46.5px;top:17.5px;font-size:16.5px;color:#6a7d9a">Starts with...</div>
  <div class="t" style="left:9px;top:54.5px;font-size:14.5px;color:#516381">300 options</div>
  <div class="abs" style="left:94px;top:54px;width:1px;height:17px;background:#e3e8f2"></div>
  <div class="abs" style="left:104px;top:53.5px;width:17px;height:17.5px;border-radius:4px;background:#cad3e2"></div>
  <div class="t" style="left:125.5px;top:54.5px;font-size:14.3px;color:#8294b0">Select all</div>
  <svg class="abs" style="left:411px;top:208px;top:55px" width="16" height="14" viewBox="0 0 16 14"><path d="M1.4 2.3 H3 M1.4 5.3 H3 M1.4 8.5 H3 M1.4 12.2 H3 M5.5 2.3 H14 M5.5 5.3 H14 M5.5 8.5 H14 M5.5 12.2 H14" stroke="#485975" stroke-width="1.3"/></svg>
  <svg class="abs" style="left:441px;top:55px" width="18" height="12" viewBox="0 0 18 12"><path d="M4.2 1 V10.5 M1.5 7.8 L4.2 10.5 L6.9 7.8" fill="none" stroke="#07101f" stroke-width="1.3"/><path d="M9.3 2.3 H16.7 M9.3 5.4 H14.3 M9.3 8.8 H12" stroke="#485975" stroke-width="1.2"/></svg>
  <div class="abs" style="left:0;top:80px;width:473px;height:1px;background:#e3e8f2"></div>
  <div class="t" style="left:45px;top:90.5px;font-size:16px;color:#07101f;font-style:italic;-webkit-text-stroke:0.35px #07101f">Exists</div>
  <div class="abs" style="left:0;top:116px;width:473px;height:1px;background:#e3e8f2"></div>
  <div class="t" style="left:45px;top:127.5px;font-size:16px;color:#1d2a3e;letter-spacing:0.45px">i-0409e212e075a5bad</div>
  <div class="t" style="right:12px;top:127.5px;font-size:14px;color:#4a5d7e;letter-spacing:0.6px">61,150</div>
  <div class="abs" style="left:0;top:151.6px;width:473px;height:1px;background:#e3e8f2"></div>
  <div class="t" style="left:45px;top:163.1px;font-size:16px;color:#1d2a3e;letter-spacing:0.45px">i-06c72a605e8d6d175</div>
  <div class="t" style="right:12px;top:163.1px;font-size:14px;color:#4a5d7e;letter-spacing:0.6px">61,150</div>
  <div class="abs" style="left:0;top:187.2px;width:473px;height:1px;background:#e3e8f2"></div>
  <div class="t" style="left:45px;top:198.7px;font-size:16px;color:#1d2a3e;letter-spacing:0.45px">i-06515644c62561de1</div>
  <div class="t" style="right:12px;top:198.7px;font-size:14px;color:#4a5d7e;letter-spacing:0.6px">61,129</div>
  <div class="abs" style="left:0;top:222.8px;width:473px;height:1px;background:#e3e8f2"></div>
  <div class="t" style="left:45px;top:234.3px;font-size:16px;color:#1d2a3e;letter-spacing:0.45px">i-0ea5f8ae8a4274397</div>
  <div class="t" style="right:12px;top:234.3px;font-size:14px;color:#4a5d7e;letter-spacing:0.6px">12,211</div>
  <div class="abs" style="left:0;top:258.4px;width:473px;height:1px;background:#e3e8f2"></div>
  <div class="t" style="left:45px;top:269.9px;font-size:16px;color:#1d2a3e;letter-spacing:0.45px">i-0b172276e315d088a</div>
  <div class="t" style="right:12px;top:269.9px;font-size:14px;color:#4a5d7e;letter-spacing:0.6px">2,367</div>
  <div class="abs" style="left:0;top:294.0px;width:473px;height:1px;background:#e3e8f2"></div>
  <div class="t" style="left:45px;top:305.5px;font-size:16px;color:#1d2a3e;letter-spacing:0.45px">i-007edc2d35ea1b153</div>
  <div class="t" style="right:12px;top:305.5px;font-size:14px;color:#4a5d7e;letter-spacing:0.6px">1,506</div>
  <div class="abs" style="left:0;top:329.6px;width:473px;height:1px;background:#e3e8f2"></div>
  <div class="abs" style="left:0;top:294px;width:472px;height:20px;background:linear-gradient(rgba(255,255,255,0),rgba(255,255,255,.85))"></div>
  <div class="abs" style="left:0;top:313px;width:472px;height:54px;background:#f7f8fc;border-top:1px solid #e3e8f2"></div>
  <div class="abs" style="left:9px;top:323px;width:159px;height:36px;border:1px solid #cad3e2;border-radius:6px;background:#fff"></div>
  <div class="abs" style="left:12.5px;top:326px;width:73px;height:29px;border-radius:4px;background:#5a6e8e"></div>
  <div class="t med" style="left:21.5px;top:333.5px;font-size:16.8px;color:#fff">Include</div>
  <div class="t" style="left:97px;top:333.5px;font-size:16.5px;color:#07101f">Exclude</div>
</div>



</body></html>
